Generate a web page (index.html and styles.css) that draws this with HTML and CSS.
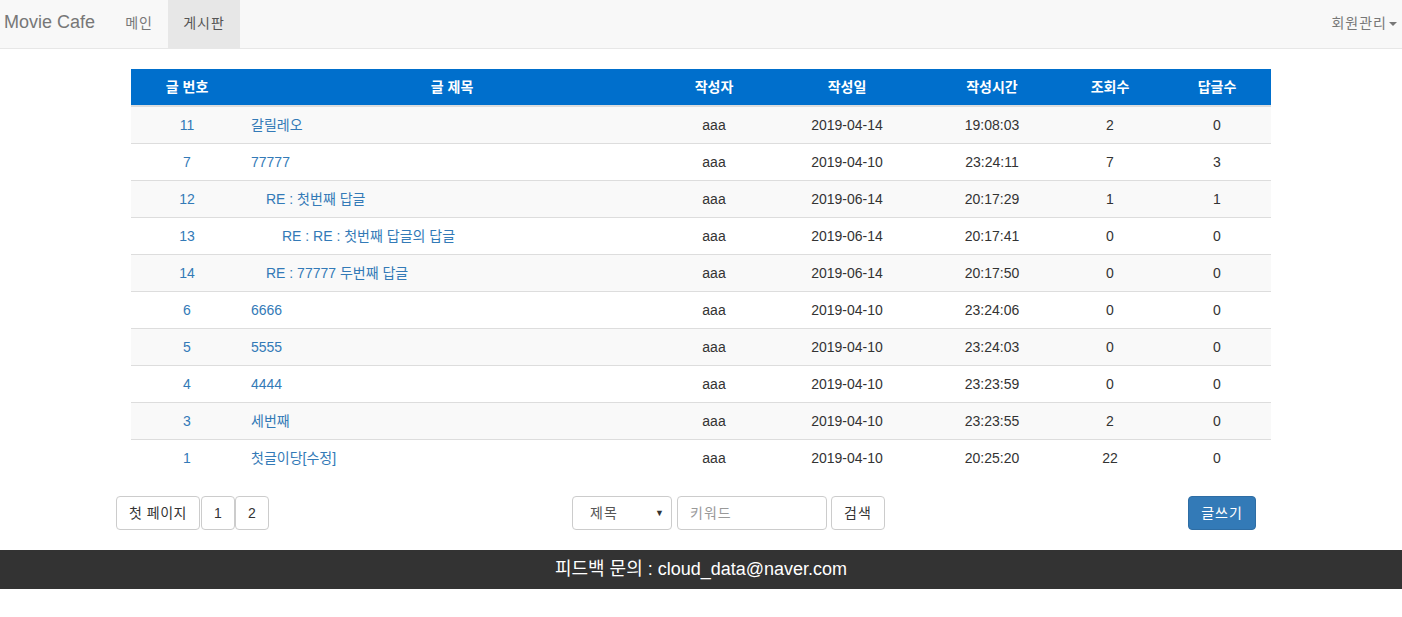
FILE: index.html
```html
<!DOCTYPE html>
<html lang="ko">
<head>
<meta charset="utf-8">
<title>Movie Cafe</title>
<link rel="stylesheet" href="styles.css">
</head>
<body>
<nav class="navbar">
  <div class="nav-left">
    <a class="brand" href="#">Movie Cafe</a>
    <a class="nav-item w-main" href="#">메인</a>
    <a class="nav-item w-board active" href="#">게시판</a>
  </div>
  <a class="nav-item dropdown" href="#">회원관리<span class="caret"></span></a>
</nav>

<main class="container">
  <table class="board">
    <colgroup>
      <col class="c-no"><col class="c-title"><col class="c-writer"><col class="c-date"><col class="c-time"><col class="c-hit"><col class="c-reply">
    </colgroup>
    <thead>
      <tr><th>글 번호</th><th>글 제목</th><th>작성자</th><th>작성일</th><th>작성시간</th><th>조회수</th><th>답글수</th></tr>
    </thead>
    <tbody>
      <tr><td><a href="#">11</a></td><td class="title"><a href="#">갈릴레오</a></td><td>aaa</td><td>2019-04-14</td><td>19:08:03</td><td>2</td><td>0</td></tr>
      <tr><td><a href="#">7</a></td><td class="title"><a href="#">77777</a></td><td>aaa</td><td>2019-04-10</td><td>23:24:11</td><td>7</td><td>3</td></tr>
      <tr><td><a href="#">12</a></td><td class="title lv1"><a href="#">RE : 첫번째 답글</a></td><td>aaa</td><td>2019-06-14</td><td>20:17:29</td><td>1</td><td>1</td></tr>
      <tr><td><a href="#">13</a></td><td class="title lv2"><a href="#">RE : RE : 첫번째 답글의 답글</a></td><td>aaa</td><td>2019-06-14</td><td>20:17:41</td><td>0</td><td>0</td></tr>
      <tr><td><a href="#">14</a></td><td class="title lv1"><a href="#">RE : 77777 두번째 답글</a></td><td>aaa</td><td>2019-06-14</td><td>20:17:50</td><td>0</td><td>0</td></tr>
      <tr><td><a href="#">6</a></td><td class="title"><a href="#">6666</a></td><td>aaa</td><td>2019-04-10</td><td>23:24:06</td><td>0</td><td>0</td></tr>
      <tr><td><a href="#">5</a></td><td class="title"><a href="#">5555</a></td><td>aaa</td><td>2019-04-10</td><td>23:24:03</td><td>0</td><td>0</td></tr>
      <tr><td><a href="#">4</a></td><td class="title"><a href="#">4444</a></td><td>aaa</td><td>2019-04-10</td><td>23:23:59</td><td>0</td><td>0</td></tr>
      <tr><td><a href="#">3</a></td><td class="title"><a href="#">세번째</a></td><td>aaa</td><td>2019-04-10</td><td>23:23:55</td><td>2</td><td>0</td></tr>
      <tr><td><a href="#">1</a></td><td class="title"><a href="#">첫글이당[수정]</a></td><td>aaa</td><td>2019-04-10</td><td>20:25:20</td><td>22</td><td>0</td></tr>
    </tbody>
  </table>

  <div class="toolbar">
    <div class="pager">
      <a class="btn w-first" href="#">첫 페이지</a><a class="btn w-num" href="#">1</a><a class="btn w-num" href="#">2</a>
    </div>
    <form class="search">
      <div class="select"><span>제목</span><span class="tri">▼</span></div>
      <input class="keyword" type="text" placeholder="키워드">
      <button class="btn w-search" type="button">검색</button>
    </form>
    <a class="btn primary w-write" href="#">글쓰기</a>
  </div>
</main>

<footer class="footer">피드백 문의 : cloud_data@naver.com</footer>
</body>
</html>
```

FILE: styles.css
```css
* { box-sizing: border-box; }
body {
  margin: 0;
  font-family: "Liberation Sans", Arial, "Noto Sans CJK KR", sans-serif;
  font-size: 14px;
  line-height: 20px;
  color: #333;
  background: #fff;
}
a { text-decoration: none; }

.navbar {
  display: flex;
  justify-content: space-between;
  height: 49px;
  background: #f8f8f8;
  border-bottom: 1px solid #e7e7e7;
}
.nav-left { display: flex; }
.brand {
  display: block;
  padding: 12px 15px 0 4px;
  font-size: 18px;
  line-height: 20px;
  color: #777;
}
.nav-item {
  display: block;
  padding: 13px 15px 0;
  color: #777;
  font-size: 14px;
  line-height: 20px;
  letter-spacing: 1px;
}
.w-main { width: 58px; padding: 13px 0 0; text-align: center; }
.w-board { width: 72px; padding: 13px 0 0; text-align: center; }
.nav-item.active { background: #e7e7e7; color: #555; }
.dropdown { padding-right: 5px; }
.caret {
  display: inline-block;
  width: 0; height: 0;
  margin-left: 2px;
  vertical-align: middle;
  border-top: 4px solid #777;
  border-left: 4px solid transparent;
  border-right: 4px solid transparent;
}

.container {
  width: 1170px;
  margin: 20px auto 0;
  padding: 0;
}
.board {
  width: 1140px;
  margin: 0 15px;
  border-collapse: collapse;
  table-layout: fixed;
}
.c-no { width: 112px; }
.c-title { width: 418px; }
.c-writer { width: 106px; }
.c-date { width: 160px; }
.c-time { width: 130px; }
.c-hit { width: 106px; }
.c-reply { width: 108px; }

.board th {
  background: #006fcc;
  color: #fff;
  font-weight: bold;
  text-align: center;
  padding: 8px;
  height: 36px;
  border-bottom: 2px solid #ddd;
}
.board td {
  padding: 8px;
  height: 37px;
  text-align: center;
  border-top: 1px solid #ddd;
}
.board tbody tr:first-child td { border-top: 0; height: 36px; }
.board tbody tr:nth-child(odd) { background: #f9f9f9; }
.board td a { color: #337ab7; }
.board td.title { text-align: left; padding-left: 8px; }
.board td.lv1 { padding-left: 23px; }
.board td.lv2 { padding-left: 39px; }

.toolbar {
  display: flex;
  justify-content: space-between;
  align-items: center;
  margin-top: 19px;
  padding: 0 30px 0 0;
}
.pager { display: flex; }
.btn {
  display: inline-block;
  height: 34px;
  padding: 6px 0;
  font-family: inherit;
  font-size: 14px;
  line-height: 20px;
  text-align: center;
  color: #333;
  background: #fff;
  border: 1px solid #ccc;
  border-radius: 4px;
  cursor: pointer;
}
.w-first { width: 84px; letter-spacing: 0.5px; }
.w-num { width: 34px; }
.pager .w-num:nth-child(2) { margin-left: 1px; }
.w-search { width: 54px; letter-spacing: 1px; }
.w-write { width: 68px; letter-spacing: 1px; }
.search {
  display: flex;
  gap: 4px;
  margin: 0;
}
.select {
  display: flex;
  justify-content: space-between;
  align-items: center;
  width: 100px;
  height: 34px;
  margin-right: 1px;
  padding: 0 6px 0 17px;
  border: 1px solid #ccc;
  border-radius: 4px;
  color: #555;
  letter-spacing: 1px;
}
.tri { font-size: 9px; color: #333; }
.keyword {
  width: 150px;
  height: 34px;
  padding: 6px 12px;
  font-family: inherit;
  font-size: 14px;
  border: 1px solid #ccc;
  border-radius: 4px;
  color: #555;
  letter-spacing: 1px;
}
.keyword::placeholder { color: #999; }
.btn.primary {
  background: #337ab7;
  border-color: #2e6da4;
  color: #fff;
}

.footer {
  margin-top: 20px;
  height: 39px;
  background: #333;
  color: #fff;
  font-size: 18px;
  line-height: 39px;
  text-align: center;
}
```
